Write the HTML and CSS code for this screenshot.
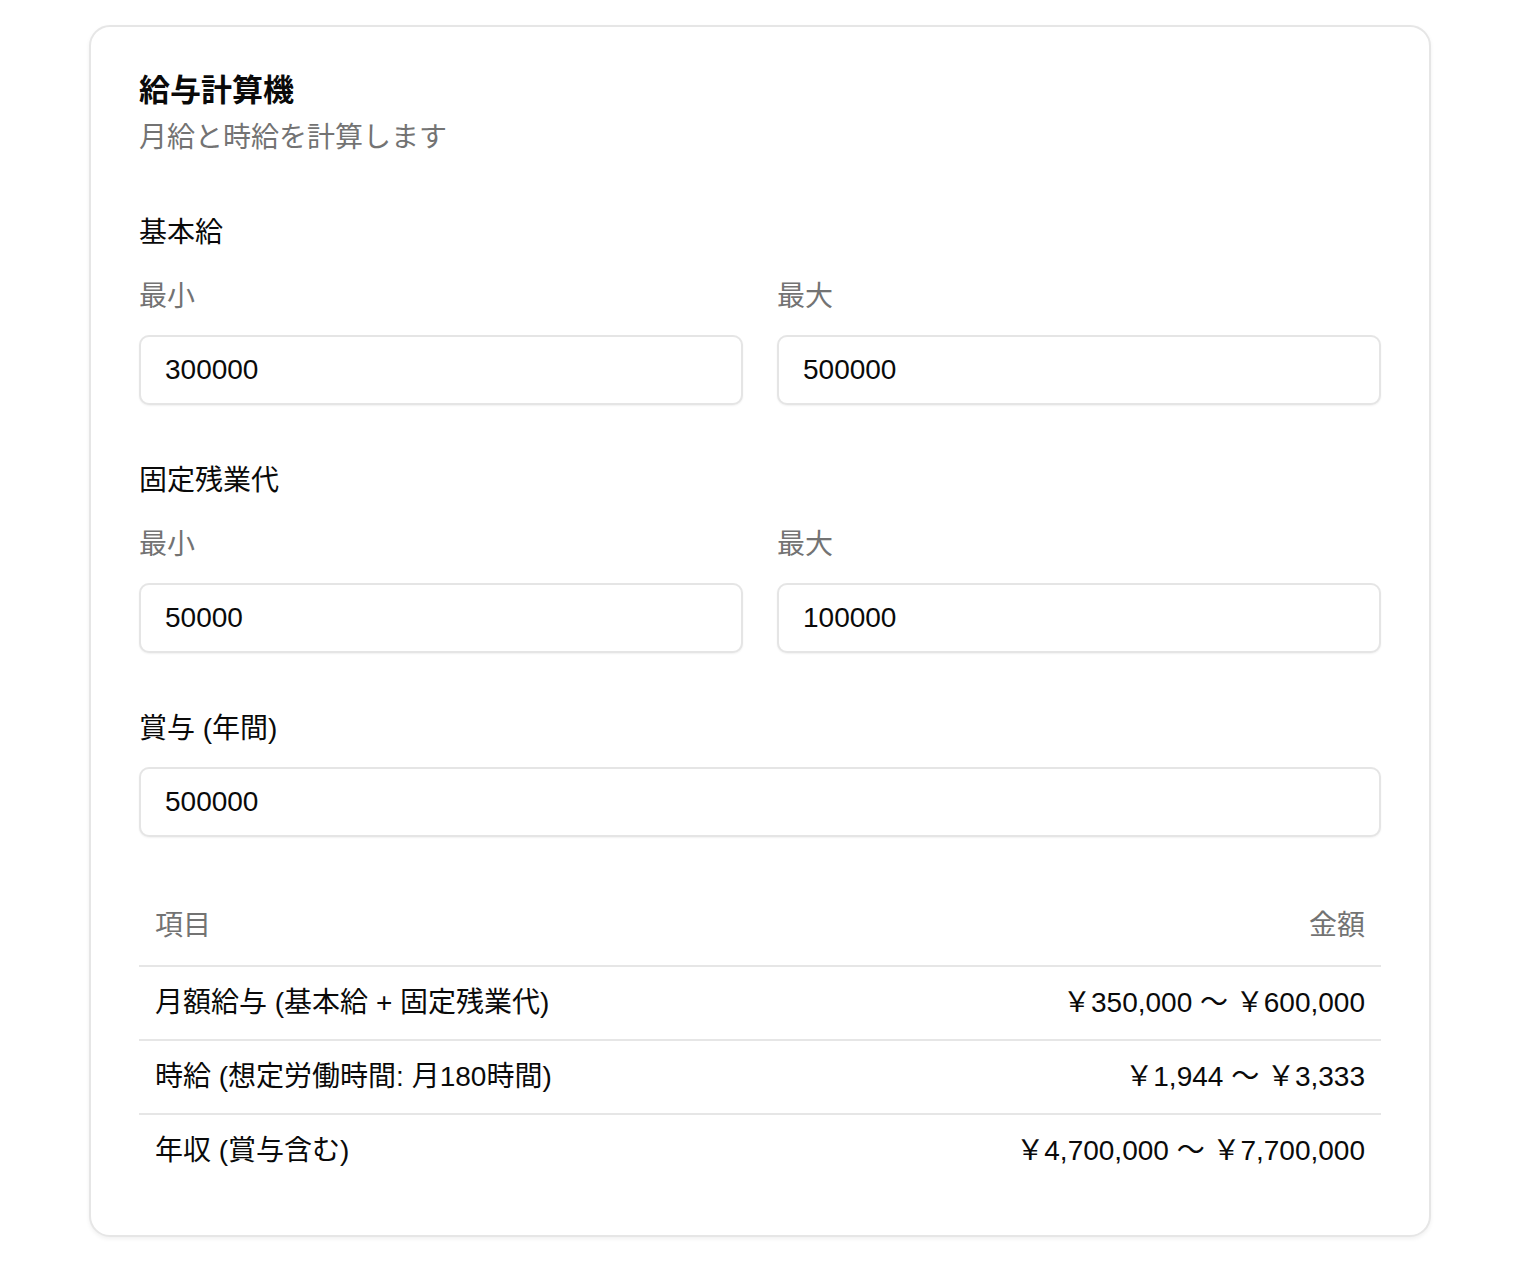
FILE: index.html
```html
<!DOCTYPE html>
<html lang="ja">
<head>
<meta charset="utf-8">
<title>給与計算機</title>
<link rel="stylesheet" href="styles.css">
</head>
<body>
<div class="page">
  <div class="card">
    <div class="card-header">
      <h1 class="card-title">給与計算機</h1>
      <p class="card-desc">月給と時給を計算します</p>
    </div>

    <section class="group">
      <div class="group-label">基本給</div>
      <div class="pair">
        <div class="field">
          <label class="sub-label">最小</label>
          <input class="input" type="text" value="300000">
        </div>
        <div class="field">
          <label class="sub-label">最大</label>
          <input class="input" type="text" value="500000">
        </div>
      </div>
    </section>

    <section class="group">
      <div class="group-label">固定残業代</div>
      <div class="pair">
        <div class="field">
          <label class="sub-label">最小</label>
          <input class="input" type="text" value="50000">
        </div>
        <div class="field">
          <label class="sub-label">最大</label>
          <input class="input" type="text" value="100000">
        </div>
      </div>
    </section>

    <section class="group">
      <div class="group-label">賞与 (年間)</div>
      <input class="input" type="text" value="500000">
    </section>

    <table class="results">
      <thead>
        <tr>
          <th class="col-left">項目</th>
          <th class="col-right">金額</th>
        </tr>
      </thead>
      <tbody>
        <tr>
          <td class="col-left">月額給与 (基本給 + 固定残業代)</td>
          <td class="col-right">￥350,000 〜 ￥600,000</td>
        </tr>
        <tr>
          <td class="col-left">時給 (想定労働時間: 月180時間)</td>
          <td class="col-right">￥1,944 〜 ￥3,333</td>
        </tr>
        <tr>
          <td class="col-left">年収 (賞与含む)</td>
          <td class="col-right">￥4,700,000 〜 ￥7,700,000</td>
        </tr>
      </tbody>
    </table>
  </div>
</div>
</body>
</html>
```

FILE: styles.css
```css
* {
  box-sizing: border-box;
}

html, body {
  margin: 0;
  padding: 0;
  background: #ffffff;
}

body {
  font-family: "Liberation Sans", "Noto Sans CJK JP", sans-serif;
  font-size: 28px;
  line-height: 42px;
  color: #0a0a0a;
}

.page {
  padding-top: 25px;
  padding-bottom: 40px;
}

.card {
  margin-left: 89px;
  width: 1342px;
  border: 2px solid #e6e6e6;
  border-radius: 21px;
  background: #ffffff;
  box-shadow: 0 2px 4px rgba(0, 0, 0, 0.06);
  padding: 48px;
}

.card-header {
  display: flex;
  flex-direction: column;
  gap: 10px;
}

.card-title {
  margin: 0;
  font-size: 31px;
  line-height: 32px;
  font-weight: 700;
  color: #0a0a0a;
}

.card-desc {
  margin: 0;
  font-size: 28px;
  line-height: 42px;
  color: #737373;
}

.group {
  margin-top: 51px;
  display: flex;
  flex-direction: column;
}

.group + .group {
  margin-top: 53px;
}

.group-label {
  font-weight: 400;
  line-height: 42px;
  padding-top: 2px;
  color: #0a0a0a;
}

.group > .input {
  margin-top: 17px;
}

.pair {
  margin-top: 20px;
  display: grid;
  grid-template-columns: 1fr 1fr;
  gap: 34px;
}

.field {
  display: flex;
  flex-direction: column;
  gap: 17px;
}

.sub-label {
  color: #737373;
  line-height: 42px;
  padding-top: 2px;
}

.input {
  display: block;
  width: 100%;
  height: 70px;
  border: 2px solid #e5e5e5;
  border-radius: 10px;
  padding: 0 24px;
  font-family: "Liberation Sans", "Noto Sans CJK JP", sans-serif;
  font-size: 28px;
  color: #0a0a0a;
  background: #ffffff;
  box-shadow: 0 1px 2px rgba(0, 0, 0, 0.06);
  outline: none;
}

.results {
  margin-top: 46px;
  width: 100%;
  border-collapse: collapse;
}

.results th {
  height: 83px;
  padding: 4px 16px 0;
  font-weight: 400;
  color: #737373;
  border-bottom: 2px solid #e6e6e6;
  vertical-align: middle;
}

.results td {
  padding: 15px 16px;
  line-height: 42px;
  border-bottom: 2px solid #e6e6e6;
}

.results tbody tr:last-child td {
  border-bottom: none;
}

.col-left {
  text-align: left;
}

.col-right {
  text-align: right;
}
```
